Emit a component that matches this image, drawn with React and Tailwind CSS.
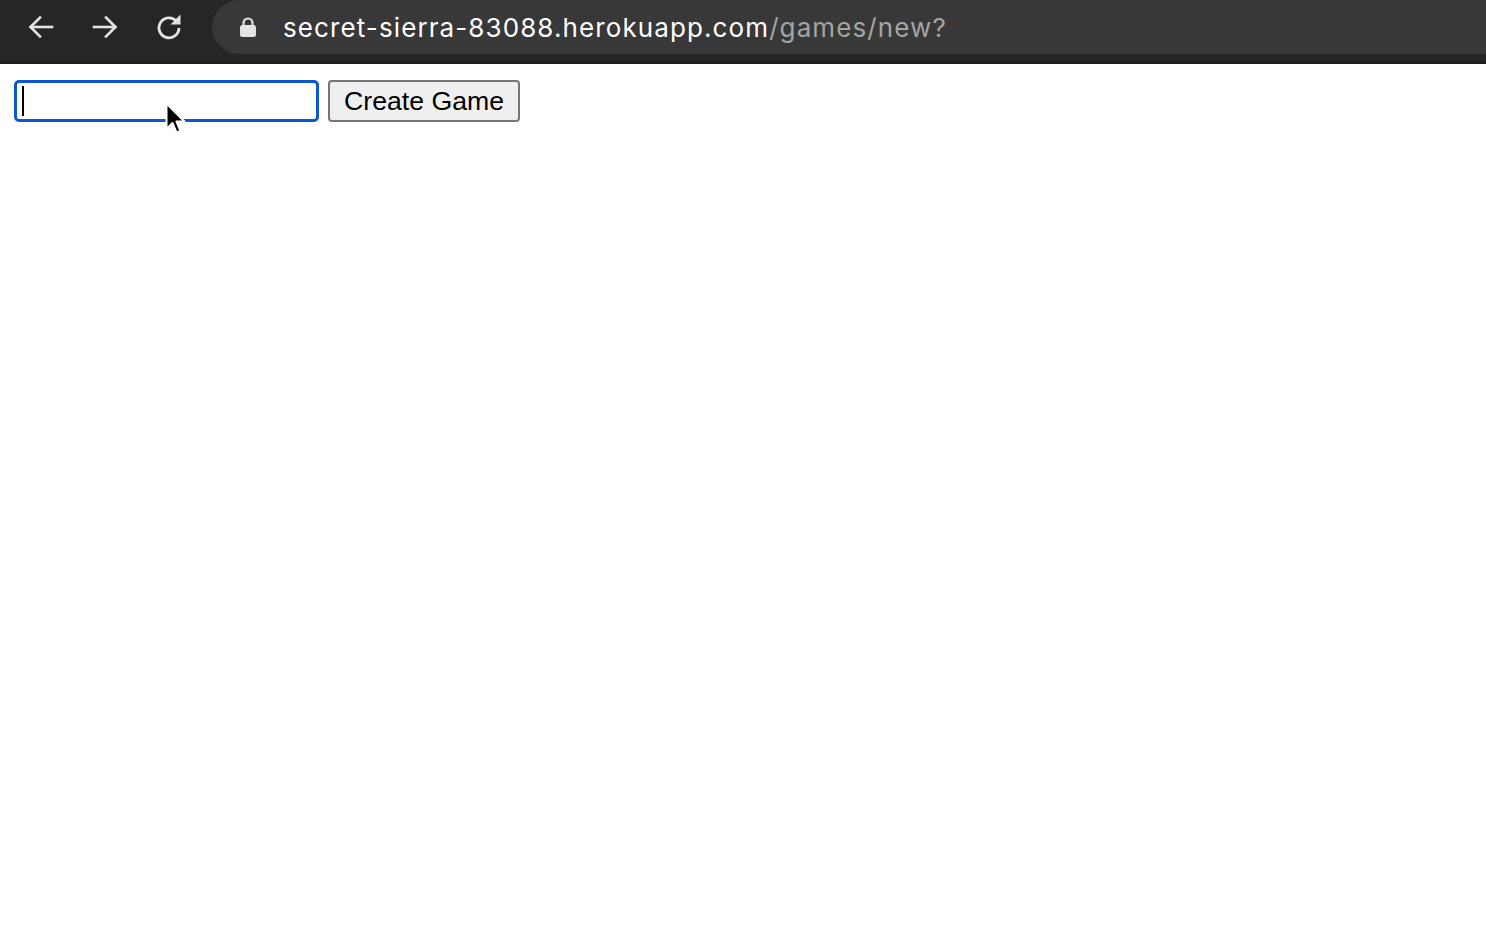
import React from "react";

const BackIcon = () => (
    <svg width="28" height="28" viewBox="0 0 28 28" fill="none" stroke="#e3e3e3" strokeWidth="2.6" strokeLinecap="square">
        <path d="M25 14H4" />
        <path d="M13 4.5L3.5 14L13 23.5" />
    </svg>
);

const ForwardIcon = () => (
    <svg width="28" height="28" viewBox="0 0 28 28" fill="none" stroke="#e3e3e3" strokeWidth="2.6" strokeLinecap="square">
        <path d="M3 14H24" />
        <path d="M15 4.5L24.5 14L15 23.5" />
    </svg>
);

const ReloadIcon = () => (
    <svg width="28" height="28" viewBox="0 0 28 28" fill="none">
        <path d="M21.5 8.2A10 10 0 1 0 24 15" stroke="#e3e3e3" strokeWidth="2.8" />
        <path d="M15.5 11.5H25.5V1.5Z" fill="#e3e3e3" />
    </svg>
);

const LockIcon = () => (
    <svg width="18" height="22" viewBox="0 0 18 22" fill="none">
        <path d="M4.5 10V7a4.5 4.5 0 0 1 9 0v3" stroke="#e3e3e3" strokeWidth="2.2" />
        <rect x="1" y="9" width="16" height="12" rx="2.5" fill="#e3e3e3" />
    </svg>
);

const Pointer = () => (
    <svg width="24" height="36" viewBox="0 0 24 36">
        <path d="M1.5 1.5V27L7.5 21L11.5 30.5L15.5 29L11.5 19.5H19.5Z" fill="#000" stroke="#fff" strokeWidth="2" strokeLinejoin="round" />
    </svg>
);

export default function App() {
    return (
        <div className="w-[1486px] h-[940px] bg-white overflow-hidden" style={{ fontFamily: '"Liberation Sans", Arial, sans-serif' }}>
            {/* browser chrome */}
            <div className="h-[64px] bg-[#262626] border-b-2 border-[#1c1c1c] flex items-start">
                <div className="flex items-center h-[54px] pl-[27px] gap-[36px]">
                    <BackIcon />
                    <ForwardIcon />
                    <ReloadIcon />
                </div>
                <div className="ml-[29px] flex-1 h-[54px] bg-[#383838] rounded-l-[27px] flex items-center pl-[27px]">
                    <LockIcon />
                    <div className="ml-[26px] text-[26px] tracking-[1.1px] text-[#ffffff] whitespace-nowrap" style={{ fontFamily: 'Inter, "Liberation Sans", sans-serif' }}>
                        secret-sierra-83088.herokuapp.com<span className="text-[#a4a4a4]">/games/new?</span>
                    </div>
                </div>
            </div>

            {/* page */}
            <form className="flex items-center gap-[9px] pl-[14px] pt-[16px]" onSubmit={e => e.preventDefault()}>
                <div className="relative">
                    <div className="w-[305px] h-[42px] border-[3px] border-[#0b57d0] rounded-[5px] bg-white flex items-center pl-[5px]">
                        <div className="w-[2px] h-[30px] bg-black" />
                    </div>
                    <div className="absolute left-[151px] top-[22px]">
                        <Pointer />
                    </div>
                </div>
                <button className="h-[42px] px-[14px] bg-[#efefef] border-2 border-[#767676] rounded-[4px] text-[26.67px] leading-none text-black">
                    Create Game
                </button>
            </form>
        </div>
    );
}
